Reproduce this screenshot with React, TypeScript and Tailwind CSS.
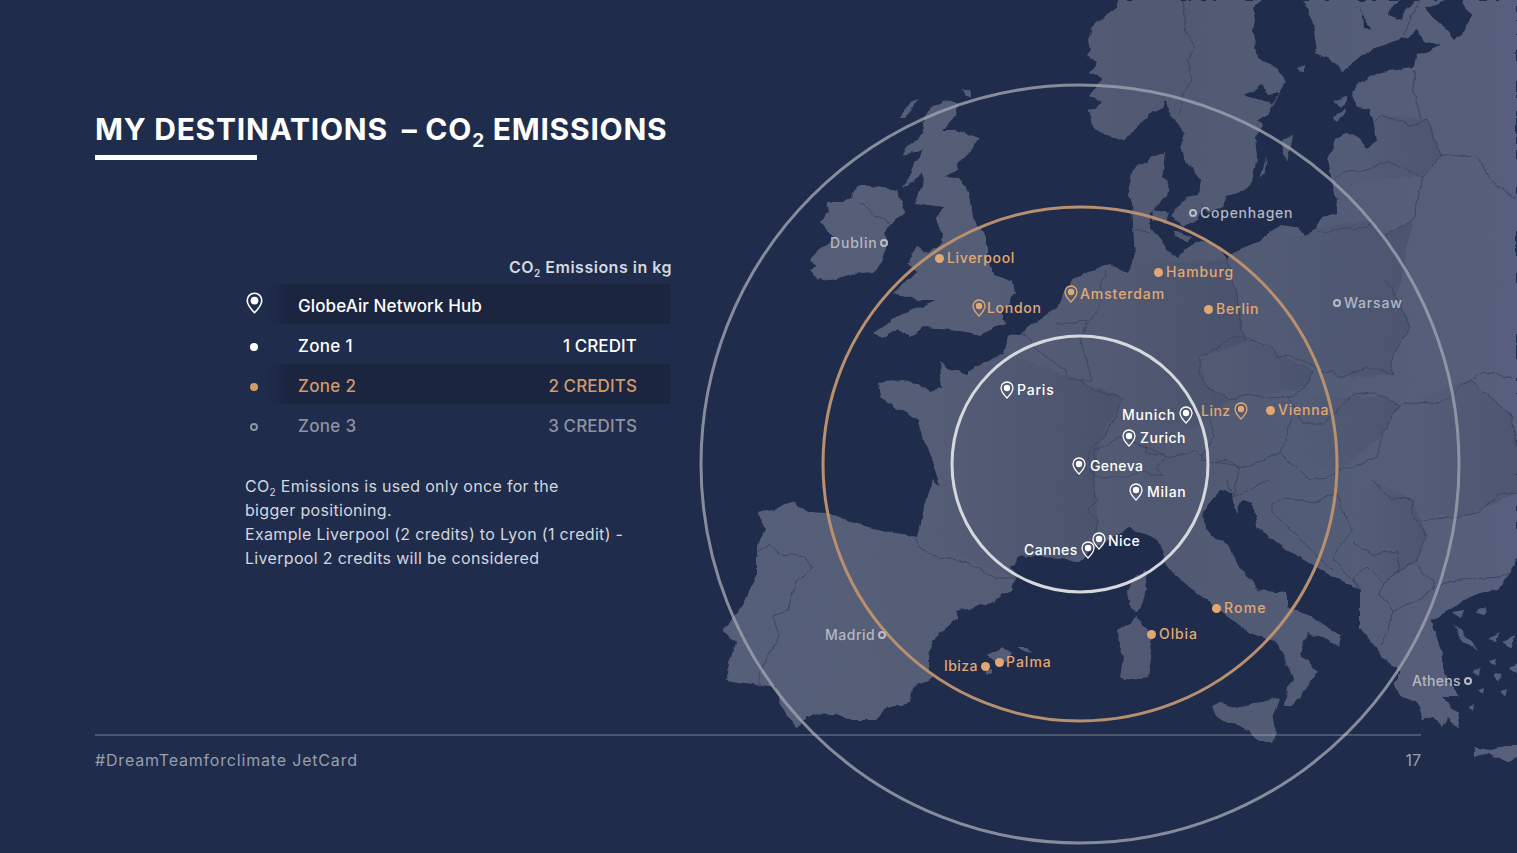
import clsx from "clsx";

// coastlines traced by hand, page coordinates (viewBox = whole slide)
const LAND = [
  // Scandinavia
  "M1120,0 1117,7 1103,17 1092,28 1088,40 1090,50 1087,55 1097,63 1090,72 1102,78 1090,95 1102,102 1088,110 1090,120 1100,132 1113,139 1125,138 1138,128 1148,115 1162,108 1165,100 1170,112 1177,123 1185,132 1182,147 1187,163 1202,182 1197,197 1207,213 1223,208 1225,197 1243,191 1252,182 1257,157 1255,137 1263,127 1257,120 1270,112 1278,97 1287,82 1277,68 1258,58 1253,33 1255,20 1253,8 1262,0Z",
  // continent: Finland, Baltic, Denmark, Benelux, France, Iberia, Italy, Balkans
  "M1303,0 1313,23 1317,53 1337,65 1343,72 1357,60 1377,47 1407,37 1417,30 1423,40 1440,45 1417,55 1413,68 1380,72 1357,85 1352,95 1357,108 1370,110 1376,140 1367,150 1357,137 1347,132 1335,140 1328,160 1333,187 1338,213 1320,217 1317,228 1305,236 1297,227 1280,225 1257,242 1233,252 1227,260 1218,247 1203,240 1187,248 1178,258 1170,253 1160,240 1150,227 1150,213 1160,203 1170,190 1163,173 1165,152 1153,157 1133,170 1128,190 1132,203 1133,227 1135,257 1128,273 1110,265 1083,272 1067,287 1057,307 1043,317 1027,328 1023,333 1007,337 1003,353 975,367 967,375 950,370 940,362 942,388 930,392 917,382 903,380 878,383 880,397 897,408 918,420 923,440 935,467 940,487 933,480 923,513 918,537 890,532 870,527 843,520 827,513 807,512 793,502 777,508 758,512 760,522 765,528 757,547 757,573 747,597 733,617 723,630 735,643 725,680 760,685 775,687 782,707 797,727 807,718 827,713 853,720 875,720 887,707 910,702 913,688 933,677 927,660 933,640 957,618 957,612 990,603 1012,590 1015,578 1010,567 1022,555 1040,557 1063,558 1077,563 1097,547 1130,528 1147,535 1160,543 1167,567 1187,585 1210,603 1233,620 1250,633 1277,643 1283,653 1293,680 1287,687 1285,707 1293,707 1317,672 1300,653 1307,633 1323,637 1340,648 1342,637 1313,617 1287,607 1287,593 1257,590 1237,563 1230,547 1205,530 1203,513 1220,490 1230,492 1237,513 1243,500 1253,503 1257,527 1283,547 1310,563 1333,577 1360,590 1360,627 1373,643 1383,657 1400,673 1393,683 1403,697 1418,703 1423,720 1433,717 1443,727 1447,717 1460,730 1457,713 1443,697 1460,697 1443,673 1443,657 1438,640 1430,620 1438,617 1453,607 1470,597 1480,593 1498,590 1510,573 1517,553 1517,0Z",
  // Ireland
  "M853,192 860,185 877,187 897,190 905,212 890,225 883,233 888,243 882,263 873,273 850,275 830,280 817,278 810,270 818,267 810,260 823,247 833,237 820,222 830,213 828,202 843,202 852,197Z",
  // Great Britain
  "M933,105 943,100 960,105 953,117 942,130 957,130 978,138 970,153 957,162 958,170 945,177 958,178 970,193 973,220 987,237 987,257 993,275 1013,280 1015,293 1002,310 1005,323 980,335 957,330 940,328 923,327 910,338 897,328 883,338 873,333 897,317 910,310 937,300 920,300 893,293 907,282 917,272 907,263 917,247 927,253 942,243 943,233 935,217 945,207 927,205 915,203 922,187 923,173 903,188 915,162 923,150 903,155 907,147 923,133 922,123Z",
  // Hebrides, Orkney
  "M900,117 910,103 918,100 913,108 905,118Z",
  "M963,90 970,90 972,97 966,96Z",
  // Corsica, Sardinia, Sicily, Crete
  "M1127,593 1130,583 1145,570 1147,590 1138,613 1130,607Z",
  "M1117,630 1138,618 1153,637 1147,677 1133,680 1120,678 1123,657 1118,640Z",
  "M1212,707 1220,703 1237,708 1257,703 1280,698 1273,720 1277,733 1273,743 1258,738 1237,725 1217,718Z",
  "M1473,747 1490,750 1517,745 1517,757 1507,762 1490,753 1473,757Z",
  // Balearics
  "M987,655 1003,647 1012,653 1007,662 993,660Z",
  "M1018,647 1027,647 1032,653 1024,651Z",
  "M985,670 993,669 990,674 985,673Z",
  // Baltic and Danish islands
  "M1283,140 1293,135 1290,150 1285,163Z",
  "M1260,180 1267,155 1265,172Z",
  "M1333,100 1347,97 1347,103 1340,107Z",
  "M1333,117 1347,108 1343,117 1335,122Z",
  "M1297,68 1305,65 1305,72 1300,73Z",
  "M1177,207 1187,197 1198,195 1202,207 1197,220 1183,227 1173,217Z",
  "M1153,210 1170,213 1167,223 1152,220Z",
  "M1173,230 1193,237 1187,243 1177,237Z",
  // Aegean
  "M1452,625 1470,640 1478,652 1462,640Z",
  "M1490,660 1497,658 1495,666Z",
  "M1478,690 1484,688 1483,695Z",
  "M1500,690 1508,688 1506,697Z",
  "M1488,640 1500,632 1497,642Z",
  "M1452,612 1464,610 1462,618Z",
  "M1475,612 1486,606 1485,616Z",
  "M1502,642 1514,636 1512,648Z",
  "M1472,672 1480,668 1479,676Z",
  "M1494,676 1501,674 1499,682Z",
  "M1510,668 1517,664 1517,674Z",
  "M1468,706 1474,704 1473,711Z",
];

// countries that darken toward their eastern edge in the reference
const SHADE = [
  "M1110,265 1227,260 1237,293 1245,342 1200,357 1207,387 1228,400 1210,420 1147,447 1120,438 1123,398 1093,390 1092,380 1102,300Z",
  "M1227,260 1317,228 1372,220 1385,235 1413,220 1397,297 1410,327 1390,360 1395,375 1340,378 1313,365 1247,338 1245,342 1238,313Z",
  "M1200,357 1247,338 1313,370 1305,388 1250,395 1228,400 1207,387Z",
  "M1003,353 1080,380 1123,398 1100,440 1095,477 1098,520 1097,547 1015,578 915,538 940,487 923,440 897,408 878,383 942,388 950,370Z",
  "M1373,480 1413,500 1427,537 1417,560 1383,583 1353,543 1343,513Z",
  "M1288,397 1385,397 1400,405 1382,435 1338,470 1280,453 1292,418Z",
  "M1400,405 1470,380 1510,413 1517,447 1517,493 1463,517 1412,513 1413,500 1373,480 1377,457Z",
  "M1333,180 1423,177 1442,155 1427,120 1382,115 1372,123 1376,140 1367,150 1347,132 1328,160Z",
];

// lakes and the gulfs the land shapes leave out
const WATER = [
  "M1243,95 1256,90 1262,85 1268,95 1280,93 1272,105 1268,102 1250,97Z",
  "M1425,8 1445,0 1462,0 1470,15 1466,28 1455,40 1445,28 1433,18Z",
  "M1390,8 1400,0 1414,0 1405,12 1402,20 1388,15Z",
  "M1360,8 1366,22 1372,30 1364,28Z",
];

const BORDERS = [
  "M1183,0 1185,17 1187,33 1195,45 1188,60 1192,80 1182,95 1180,115",
  "M1420,0 1403,35",
  "M1415,70 1412,87 1420,120",
  "M1372,123 1382,115 1410,125 1427,120 1442,155",
  "M1333,180 1343,172 1363,170 1388,162 1423,177 1420,190 1413,220 1385,235",
  "M1317,232 1367,227 1372,220",
  "M1423,177 1442,155 1477,157 1493,183 1517,200",
  "M1385,280 1397,297 1410,327 1390,360 1395,375",
  "M1200,357 1233,338 1247,338 1272,348 1278,358 1287,355 1313,365 1325,373 1332,370 1340,378 1367,368 1385,372 1395,375",
  "M1227,260 1230,270 1237,293 1238,313 1245,342",
  "M1200,357 1200,373 1207,387 1228,400 1250,395 1280,398 1288,397 1305,388 1313,370",
  "M1288,397 1303,423 1325,423 1335,412 1353,395 1372,393 1385,397 1400,405",
  "M1400,405 1403,402 1440,403 1450,395 1470,380 1483,372 1513,378",
  "M1400,405 1382,435 1377,457 1360,465 1338,470",
  "M1292,418 1280,453 1310,480 1327,478 1338,470",
  "M1210,420 1215,437 1200,460 1247,467 1280,453",
  "M1470,380 1510,413 1517,447",
  "M1420,520 1463,517 1477,513 1497,495 1517,493",
  "M1373,480 1387,497 1413,500 1412,513 1427,537 1417,560 1400,570 1383,583 1380,593 1393,610 1387,633 1380,647",
  "M1417,565 1433,580 1433,590 1417,602 1393,610",
  "M1433,587 1460,580 1500,577 1510,573",
  "M1273,503 1287,498 1313,503 1337,493 1343,513 1353,530 1337,550 1333,560 1353,580 1360,590",
  "M1273,503 1273,512 1283,523 1307,547 1333,570",
  "M1353,543 1373,555 1397,552 1400,570 1383,583 1367,567 1353,577 1360,590",
  "M1227,480 1233,497 1260,485 1270,480",
  "M1147,447 1167,457 1197,452 1210,463 1227,460 1240,467 1233,497",
  "M1095,450 1120,438 1147,447 1148,453 1167,457 1157,467 1163,477 1140,470 1127,477 1095,477 1093,487 1098,500 1088,510 1098,520 1097,533",
  "M1095,450 1095,477",
  "M1080,380 1093,390 1123,398 1110,427 1100,440 1087,457 1095,477",
  "M1023,333 1037,350 1050,360 1063,367 1070,380 1080,380 1092,380 1087,363 1080,338",
  "M1057,323 1075,323 1087,320 1080,338 1102,300 1100,290 1107,270",
  "M1133,230 1150,232",
  "M915,538 920,547 937,558 960,560 977,568 997,578 1015,578",
  "M758,552 770,545 777,553 805,557 812,568 795,583 788,610 773,617 780,637 770,653 760,672 760,685",
  "M860,203 877,217 890,223",
];

function Pin({ className }: { className?: string }) {
  return (
    <svg viewBox="0 0 14 18" fill="none" className={clsx("w-[14px] h-[18px] shrink-0", className)}>
      <path
        d="M7 1C3.6 1 1 3.7 1 7c0 3.6 3.4 7.400 6 10 2.600-2.600 6-6.400 6-10 0-3.300-2.600-6-6-6z"
        stroke="currentColor"
        strokeWidth="1.300"
      />
      <circle cx="7" cy="7" r="3.200" fill="currentColor" />
    </svg>
  );
}

const Dot = ({ className }: { className?: string }) => (
  <span className={clsx("block w-[9px] h-[9px] rounded-full bg-[#e2a873] shrink-0", className)} />
);

const Ring = ({ className }: { className?: string }) => (
  <span className={clsx("block w-[8px] h-[8px] rounded-full border-2 border-[#b9bcc7] shrink-0", className)} />
);

const ORANGE = "text-[#e2a873]";
const WHITE = "text-white";
const GRAY = "text-[#b4b7c3]";

const PLACES = [
  { name: "Liverpool", pos: "left-[935px] top-[258px]", tone: ORANGE, mark: "dot", track: "tracking-[0.65px]" },
  { name: "Hamburg", pos: "left-[1154px] top-[272px]", tone: ORANGE, mark: "dot", track: "tracking-[0.9px]" },
  { name: "Amsterdam", pos: "left-[1064px] top-[294px]", tone: ORANGE, mark: "pin", track: "tracking-[0.9px] -ml-[1px]" },
  { name: "London", pos: "left-[972px] top-[308px]", tone: ORANGE, mark: "pin", track: "tracking-[0.7px] -ml-[2px]" },
  { name: "Berlin", pos: "left-[1204px] top-[309px]", tone: ORANGE, mark: "dot", track: "tracking-[0.8px]" },
  { name: "Linz", pos: "left-[1201px] top-[411px]", tone: ORANGE, mark: "pin", side: "left", track: "tracking-[0.5px]" },
  { name: "Vienna", pos: "left-[1266px] top-[410px]", tone: ORANGE, mark: "dot", track: "tracking-[0.8px]" },
  { name: "Rome", pos: "left-[1212px] top-[608px]", tone: ORANGE, mark: "dot", track: "tracking-[1.2px]" },
  { name: "Olbia", pos: "left-[1147px] top-[634px]", tone: ORANGE, mark: "dot", track: "tracking-[0.9px]" },
  { name: "Palma", pos: "left-[995px] top-[662px]", tone: ORANGE, mark: "dot", track: "tracking-[1px] -ml-[1px]" },
  { name: "Ibiza", pos: "left-[944px] top-[666px]", tone: ORANGE, mark: "dot", side: "left", track: "tracking-[0.4px]" },
  { name: "Dublin", pos: "left-[830px] top-[243px]", tone: GRAY, mark: "ring", side: "left", track: "tracking-[0.8px]" },
  { name: "Copenhagen", pos: "left-[1189px] top-[213px]", tone: GRAY, mark: "ring", track: "tracking-[0.75px]" },
  { name: "Warsaw", pos: "left-[1333px] top-[303px]", tone: GRAY, mark: "ring", track: "tracking-[0.8px]" },
  { name: "Madrid", pos: "left-[825px] top-[635px]", tone: GRAY, mark: "ring", side: "left", track: "tracking-[0.5px]" },
  { name: "Athens", pos: "left-[1412px] top-[681px]", tone: GRAY, mark: "ring", side: "left", track: "tracking-[0.3px]" },
  { name: "Paris", pos: "left-[1000px] top-[390px]", tone: WHITE, mark: "pin", track: "tracking-[0.8px]" },
  { name: "Munich", pos: "left-[1122px] top-[415px]", tone: WHITE, mark: "pin", side: "left", track: "tracking-[0.7px]" },
  { name: "Zurich", pos: "left-[1122px] top-[438px]", tone: WHITE, mark: "pin", track: "tracking-[0.5px] ml-[1px]" },
  { name: "Geneva", pos: "left-[1072px] top-[466px]", tone: WHITE, mark: "pin", track: "tracking-[0.4px] ml-[1px]" },
  { name: "Milan", pos: "left-[1129px] top-[492px]", tone: WHITE, mark: "pin", track: "tracking-[0.6px] ml-[1px]" },
  { name: "Nice", pos: "left-[1092px] top-[541px]", tone: WHITE, mark: "pin", track: "tracking-[0.4px] -ml-[1px]" },
  { name: "Cannes", pos: "left-[1024px] top-[550px]", tone: WHITE, mark: "pin", side: "left", track: "tracking-[0.5px]" },
];

function Place({ name, pos, tone, mark, side, track }: (typeof PLACES)[number]) {
  const marker =
    mark === "pin" ? <Pin /> : mark === "dot" ? <Dot /> : <Ring />;
  return (
    <div className={clsx("absolute -translate-y-1/2 flex items-center gap-[3px] text-[14px] font-medium leading-none whitespace-nowrap", pos, tone)}>
      {side === "left" ? (
        <>
          <span className={track}>{name}</span>
          {marker}
        </>
      ) : (
        <>
          {marker}
          <span className={track}>{name}</span>
        </>
      )}
    </div>
  );
}

function EuropeMap() {
  return (
    <svg viewBox="0 0 1517 853" className="absolute inset-0 w-[1517px] h-[853px]">
      <defs>
        <linearGradient id="land" gradientUnits="userSpaceOnUse" x1="720" y1="0" x2="1517" y2="0">
          <stop offset="0" stopColor="#565f79" />
          <stop offset="0.35" stopColor="#555d76" />
          <stop offset="0.55" stopColor="#515972" />
          <stop offset="0.75" stopColor="#535c76" />
          <stop offset="1" stopColor="#585f7c" />
        </linearGradient>
        <linearGradient id="shade" x1="0" y1="0" x2="1" y2="0">
          <stop offset="0.2" stopColor="#343c58" stopOpacity="0" />
          <stop offset="1" stopColor="#343c58" stopOpacity="0.28" />
        </linearGradient>
        <clipPath id="landClip">
          {LAND.map((d) => (
            <path key={d} d={d} />
          ))}
        </clipPath>
        <filter id="rough" x="0" y="0" width="100%" height="100%" colorInterpolationFilters="sRGB">
          <feTurbulence type="fractalNoise" baseFrequency="0.09" numOctaves="2" seed="4" />
          <feDisplacementMap in="SourceGraphic" scale="6" xChannelSelector="R" yChannelSelector="G" />
        </filter>
      </defs>
      <g filter="url(#rough)">
        {LAND.map((d) => (
          <path key={d} d={d} fill="url(#land)" />
        ))}
        <g clipPath="url(#landClip)">
          {SHADE.map((d) => (
            <path key={d} d={d} fill="url(#shade)" />
          ))}
        </g>
        {WATER.map((d) => (
          <path key={d} d={d} fill="#1f2c4c" />
        ))}
        {BORDERS.map((d) => (
          <path key={d} d={d} fill="none" stroke="#3c4560" strokeWidth="1" />
        ))}
      </g>
      <circle cx="1080" cy="464" r="379" fill="none" stroke="#9a9eac" strokeWidth="3" opacity="0.85" />
      <circle cx="1080" cy="464" r="257" fill="none" stroke="#b8906f" strokeWidth="3" />
      <circle cx="1080" cy="464" r="128" fill="none" stroke="#d6d8de" strokeWidth="3" />
    </svg>
  );
}

const ROWS = [
  { label: "Zone 1", credit: "1 CREDIT", tone: "text-white", mark: <span className="block w-[8px] h-[8px] rounded-full bg-white" /> },
  { label: "Zone 2", credit: "2 CREDITS", tone: "text-[#d19a6c]", mark: <span className="block w-[8px] h-[8px] rounded-full bg-[#d19a6c]" />, bar: true },
  { label: "Zone 3", credit: "3 CREDITS", tone: "text-[#8f93a1]", mark: <span className="block w-[8px] h-[8px] rounded-full border-2 border-[#8f93a1]" /> },
];

export default function App() {
  return (
    <div
      className="relative w-[1517px] h-[853px] overflow-hidden bg-[#1f2c4c] text-white"
      style={{ fontFamily: "Inter, 'Liberation Sans', sans-serif" }}
    >
      <EuropeMap />
      {PLACES.map((p) => (
        <Place key={p.name} {...p} />
      ))}

      <div className="relative pl-[95px] pt-[111px]">
        <h1 className="text-[30px] leading-[36px] font-bold tracking-[0.75px] whitespace-nowrap">
          MY DESTINATIONS <span className="ml-[6px]">–</span> CO<sub className="text-[19px] -bottom-[7px]">2</sub> EMISSIONS
        </h1>
        <div className="w-[162px] h-[5px] mt-[8px] bg-white" />

        <div className="ml-[150px] w-[425px] mt-[95px]">
          <div className="h-[29px] -mr-[2px] text-right text-[16px] leading-[24px] font-semibold text-[#d5d7de] tracking-[0.5px] whitespace-nowrap">
            CO<sub className="text-[10px] -bottom-[4px]">2</sub> Emissions in kg
          </div>
          <div className="flex items-center h-10 bg-linear-to-r from-[#1f2c4c] from-5% to-[#1b2540] to-10%">
            <span className="w-[53px] shrink-0 -mt-[2px] pl-[1px]">
              <Pin className="w-[17px] h-[22px]" />
            </span>
            <span className="pt-[6px] text-[17px] font-medium tracking-[0.1px]">GlobeAir Network Hub</span>
          </div>
          {ROWS.map((r) => (
            <div
              key={r.label}
              className={clsx(
                "flex items-center h-10 pr-[33px] text-[17px] font-medium",
                r.tone,
                r.bar && "bg-linear-to-r from-[#1f2c4c] from-5% to-[#1b2540] to-10%"
              )}
            >
              <span className="w-[53px] shrink-0 pl-[5px] pt-[5px]">{r.mark}</span>
              <span className="flex-1 pt-[5px] tracking-[0.3px]">{r.label}</span>
              <span className="pt-[5px] tracking-[0.1px]">{r.credit}</span>
            </div>
          ))}

          <p className="mt-[30px] text-[16px] leading-[24px] text-[#d4d6dd] whitespace-nowrap tracking-[0.32px]">
            CO<sub className="text-[10px] -bottom-[4px]">2</sub> Emissions is used only once for the
            <br />
            bigger positioning.
            <br />
            Example Liverpool (2 credits) to Lyon (1 credit) -
            <br />
            Liverpool 2 credits will be considered
          </p>
        </div>

        <div className="w-[1326px] mt-[164px] border-t-2 border-white/20 pt-[12px] flex justify-between text-[16px] leading-[24px] text-[#9a9eac]">
          <span className="tracking-[0.82px]">#DreamTeamforclimate JetCard</span>
          <span>17</span>
        </div>
      </div>
    </div>
  );
}
